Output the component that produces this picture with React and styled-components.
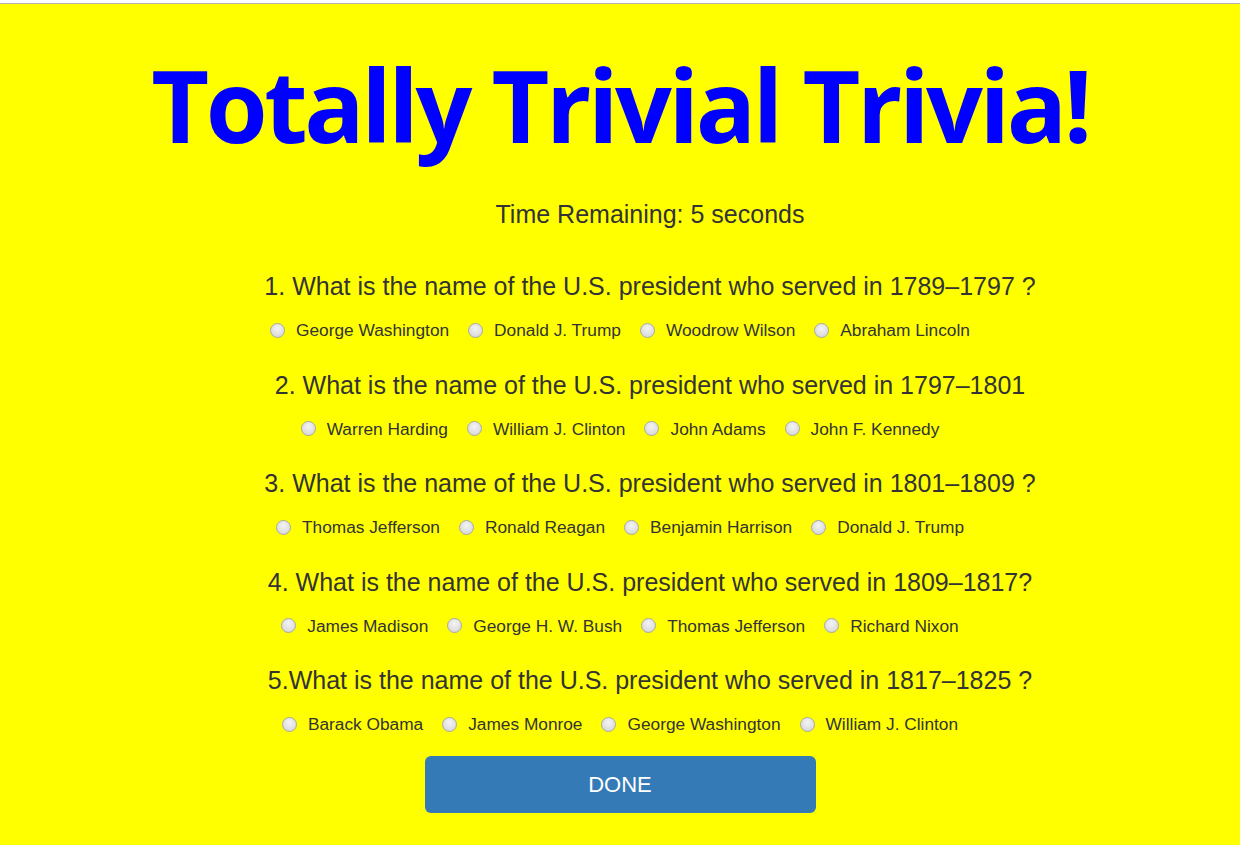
import React from "react";
import styled, { createGlobalStyle } from "styled-components";

const Global = createGlobalStyle`
  html, body { margin: 0; padding: 0; background: #fff; }
  body { font-family: "Liberation Sans", Arial, sans-serif; color: #333; }
`;

const Page = styled.div`
  margin-top: 3px;
  border-top: 1px solid #b4b4b4;
  background: #ffff00;
  min-height: 841px;
  display: flex;
  flex-direction: column;
  align-items: center;
`;

const Title = styled.h1`
  margin: 40px 0 0;
  font-family: "Open Sans", "Noto Sans", sans-serif;
  font-weight: 700;
  font-size: 100px;
  line-height: 120px;
  color: #0000ff;
  letter-spacing: -3.4px;
`;

const Timer = styled.div`
  margin: 35px 0 0 60px;
  font-size: 25px;
  line-height: 30px;
`;

const Quiz = styled.div`
  margin: 42px 0 0;
  display: flex;
  flex-direction: column;
  align-items: center;
  gap: 28.5px;
`;

const Block = styled.div`
  display: flex;
  flex-direction: column;
  align-items: center;
  gap: 18px;
`;

const Question = styled.div`
  margin-left: 60px;
  font-size: 25px;
  line-height: 30px;
`;

const Options = styled.div`
  display: flex;
  gap: 19px;
  font-size: 17.3px;
  line-height: 22px;
`;

const Option = styled.label`
  display: flex;
  align-items: center;
  gap: 11px;
`;

const Radio = styled.input`
  appearance: none;
  margin: 0;
  width: 15px;
  height: 15px;
  border-radius: 50%;
  border: 1px solid #a8a8a8;
  background: radial-gradient(circle at 50% 35%, #f4f4f4 0%, #dcdcdc 70%, #cfcfcf 100%);
  box-sizing: border-box;
`;

const Done = styled.button`
  margin: 21px 0 0;
  width: 391px;
  height: 57px;
  border: none;
  border-radius: 6px;
  background: #337ab7;
  color: #fff;
  font-family: "Liberation Sans", Arial, sans-serif;
  font-size: 22px;
`;

const questions = [
  { q: "1. What is the name of the U.S. president who served in 1789–1797 ?", a: ["George Washington", "Donald J. Trump", "Woodrow Wilson", "Abraham Lincoln"] },
  { q: "2. What is the name of the U.S. president who served in 1797–1801", a: ["Warren Harding", "William J. Clinton", "John Adams", "John F. Kennedy"] },
  { q: "3. What is the name of the U.S. president who served in 1801–1809 ?", a: ["Thomas Jefferson", "Ronald Reagan", "Benjamin Harrison", "Donald J. Trump"] },
  { q: "4. What is the name of the U.S. president who served in 1809–1817?", a: ["James Madison", "George H. W. Bush", "Thomas Jefferson", "Richard Nixon"] },
  { q: "5.What is the name of the U.S. president who served in 1817–1825 ?", a: ["Barack Obama", "James Monroe", "George Washington", "William J. Clinton"] },
];

export default function App() {
  return (
    <>
      <Global />
      <Page>
        <Title>Totally Trivial Trivia!</Title>
        <Timer>Time Remaining: 5 seconds</Timer>
        <Quiz>
          {questions.map((item, i) => (
            <Block key={i}>
              <Question>{item.q}</Question>
              <Options>
                {item.a.map((a) => (
                  <Option key={a}>
                    <Radio type="radio" name={`q${i}`} />
                    {a}
                  </Option>
                ))}
              </Options>
            </Block>
          ))}
        </Quiz>
        <Done>DONE</Done>
      </Page>
    </>
  );
}
